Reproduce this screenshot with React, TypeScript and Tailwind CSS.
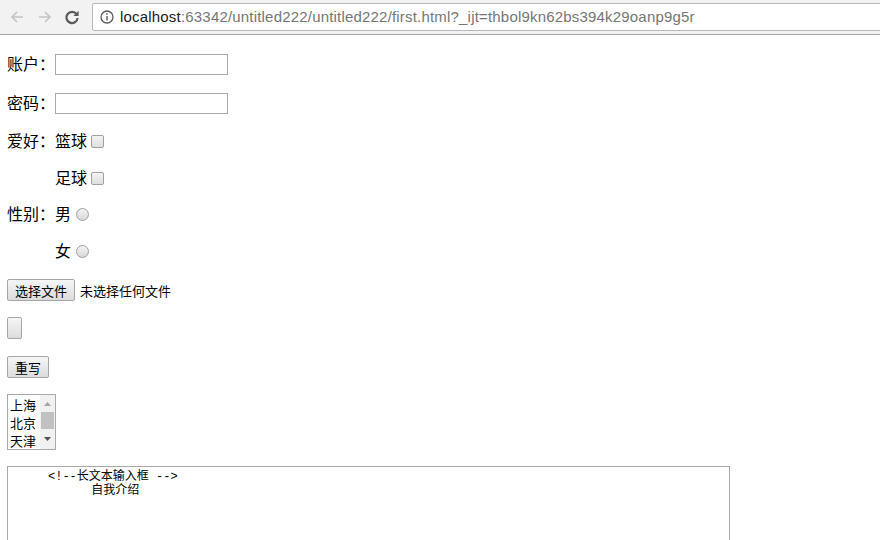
import React from "react";

const cjk = { fontFamily: '"Microsoft YaHei","Noto Sans CJK SC",sans-serif' };

function Checkbox() {
  return (
    <span className="inline-block w-[13px] h-[13px] rounded-[2px] border border-[#a0a0a0] bg-gradient-to-b from-[#f4f4f4] to-[#dedede] ml-[4px]" />
  );
}
function Radio() {
  return (
    <span className="inline-block w-[13px] h-[13px] rounded-full border border-[#a0a0a0] bg-gradient-to-b from-[#f4f4f4] to-[#d8d8d8] ml-[5px]" />
  );
}

function Btn({ children, w }: { children?: React.ReactNode; w: string }) {
  return (
    <div
      className={`h-[22px] ${w} border border-[#a6a6a6] rounded-[2px] bg-gradient-to-b from-[#f6f6f6] to-[#dcdcdc] text-[13px] text-black flex items-center justify-center`}
      style={cjk}
    >
      {children}
    </div>
  );
}

export default function App() {
  return (
    <div className="w-[880px] h-[540px] overflow-hidden bg-white relative">
      {/* toolbar */}
      <div className="h-[35px] bg-[#f2f2f2] border-b border-[#a8a8a8] flex items-center">
        <div className="w-[92px] flex items-center h-full">
          <svg width="16" height="16" viewBox="0 0 16 16" className="ml-[9px]">
            <path d="M14 8H3M8 3L3 8l5 5" stroke="#c4c4c4" strokeWidth="1.6" fill="none" />
          </svg>
          <svg width="16" height="16" viewBox="0 0 16 16" className="ml-[12px]">
            <path d="M2 8h11M8 3l5 5-5 5" stroke="#c4c4c4" strokeWidth="1.6" fill="none" />
          </svg>
          <svg width="16" height="16" viewBox="0 0 16 16" className="ml-[11px]">
            <path d="M12.6 5.2A5.6 5.6 0 1 0 13.6 9" stroke="#5a5a5a" strokeWidth="2.2" fill="none" />
            <path d="M14.6 1.8v5.2H9.4z" fill="#5a5a5a" />
          </svg>
        </div>
        <div className="flex-1 h-[28px] bg-white border border-[#b9b9b9] rounded-[2px] flex items-center mr-[-4px]">
          <svg width="14" height="14" viewBox="0 0 14 14" className="ml-[7px]">
            <circle cx="7" cy="7" r="6" stroke="#5a5a5a" strokeWidth="1.3" fill="none" />
            <rect x="6.3" y="6" width="1.4" height="4.5" fill="#5a5a5a" />
            <rect x="6.3" y="3.3" width="1.4" height="1.4" fill="#5a5a5a" />
          </svg>
          <span className="ml-[6px] text-[15px] tracking-[0.19px]" style={{ fontFamily: '"Liberation Sans",Arial,sans-serif' }}>
            <span className="text-[#1c1c1c]">localhost</span>
            <span className="text-[#767676]">:63342/untitled222/untitled222/first.html?_ijt=thbol9kn62bs394k29oanp9g5r</span>
          </span>
        </div>
      </div>

      {/* page */}
      <div className="pl-[7px] text-[16px] text-black leading-none" style={cjk}>
        <div className="mt-[19px] h-[21px] flex items-center">
          <span className="w-[48px] pb-[3px]">账户：</span>
          <div className="w-[173px] h-[21px] border border-[#a9a9a9] bg-white" />
        </div>
        <div className="mt-[18px] h-[21px] flex items-center">
          <span className="w-[48px] pb-[3px]">密码：</span>
          <div className="w-[173px] h-[21px] border border-[#a9a9a9] bg-white" />
        </div>
        <div className="mt-[17px] h-[21px] flex items-center">
          <span className="w-[48px] pb-[3px]">爱好：</span>
          <span className="pb-[3px]">篮球</span>
          <Checkbox />
        </div>
        <div className="mt-[16px] h-[21px] flex items-center">
          <span className="w-[48px]" />
          <span className="pb-[3px]">足球</span>
          <Checkbox />
        </div>
        <div className="mt-[15px] h-[21px] flex items-center">
          <span className="w-[48px] pb-[3px]">性别：</span>
          <span className="pb-[3px]">男</span>
          <Radio />
        </div>
        <div className="mt-[16px] h-[21px] flex items-center">
          <span className="w-[48px]" />
          <span className="pb-[3px]">女</span>
          <Radio />
        </div>
        <div className="mt-[17px] h-[22px] flex items-center">
          <Btn w="w-[68px]">选择文件</Btn>
          <span className="ml-[5px] text-[13px]">未选择任何文件</span>
        </div>
        <div className="mt-[16px] flex">
          <Btn w="w-[15px]" />
        </div>
        <div className="mt-[17px] flex">
          <Btn w="w-[42px]">重写</Btn>
        </div>
        <div className="mt-[16px] w-[49px] h-[56px] border border-[#a9a9a9] flex bg-white">
          <div className="flex-1 text-[13px] leading-[18px] pl-[2px] pt-[1px]" style={cjk}>
            <div>上海</div>
            <div>北京</div>
            <div>天津</div>
          </div>
          <div className="w-[15px] bg-[#f1f1f1] flex flex-col items-center">
            <div className="h-[17px] flex items-center justify-center">
              <svg width="7" height="4" viewBox="0 0 7 4"><path d="M0 4L3.5 0 7 4z" fill="#a3a3a3" /></svg>
            </div>
            <div className="w-[13px] h-[17px] bg-[#c1c1c1]" />
            <div className="flex-1 flex items-center justify-center">
              <svg width="7" height="4" viewBox="0 0 7 4"><path d="M0 0h7L3.5 4z" fill="#505050" /></svg>
            </div>
          </div>
        </div>
        <div className="mt-[16px] w-[723px] h-[100px] border border-[#a9a9a9] bg-white">
          <pre className="text-[12px] leading-[14px] pl-[4px] pt-[3px] text-black" style={{ fontFamily: '"SimSun","Liberation Mono","Noto Sans CJK SC",monospace' }}>
{"     <!--长文本输入框 -->\n           自我介绍"}
          </pre>
        </div>
      </div>
    </div>
  );
}
